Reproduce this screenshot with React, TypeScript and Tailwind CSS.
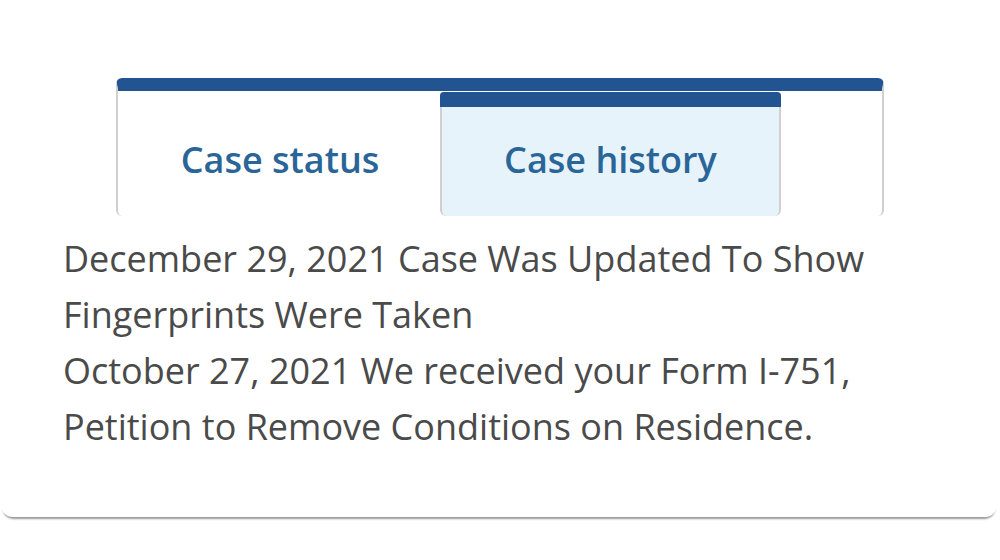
import React, { useState } from "react";

const tabs = ["Case status", "Case history"];

const history = [
  ["December 29, 2021 Case Was Updated To Show", "Fingerprints Were Taken"],
  ["October 27, 2021 We received your Form I-751,", "Petition to Remove Conditions on Residence."],
];

export default function App() {
  const [active, setActive] = useState(1);

  return (
    <div className="min-h-[560px] bg-white font-['Open_Sans','Noto_Sans',sans-serif]">
      <div className="ml-px w-[996px] rounded-b-xl bg-white pt-[78px] pb-[62px] shadow-[0_4px_2px_-2px_rgba(0,0,0,0.4)]">
        <div className="ml-[115px] w-[768px] rounded-t-md rounded-b-md border-x-2 border-t-[13px] border-x-[#d0d0d0] border-t-[#235492]">
          <div className="flex h-[125px] items-start">
            {tabs.map((tab, i) =>
              i === active ? (
                <button
                  key={tab}
                  onClick={() => setActive(i)}
                  className="mt-px flex h-[124px] w-[341px] flex-col rounded-t-[4px] rounded-b-md border-x-2 border-x-[#d0d0d0] bg-[#e6f3fb]"
                >
                  <div className="-mx-[2px] h-[15px] rounded-t-[4px] bg-[#235492]" />
                  <span className="flex flex-1 items-center justify-center pb-[4px] text-[36px] font-semibold text-[#2a6597]">
                    {tab}
                  </span>
                </button>
              ) : (
                <button
                  key={tab}
                  onClick={() => setActive(i)}
                  className="flex h-[125px] w-[322px] items-center justify-center pt-[12px] pl-[2px] text-[36px] font-semibold text-[#2a6597]"
                >
                  {tab}
                </button>
              )
            )}
          </div>
        </div>

        <div className="mt-[15px] pl-[62px] text-[36px] leading-[56px] text-[#4a4a4a]">
          {history.map((lines) => (
            <p key={lines[0]}>
              {lines[0]}
              <br />
              {lines[1]}
            </p>
          ))}
        </div>
      </div>
    </div>
  );
}
